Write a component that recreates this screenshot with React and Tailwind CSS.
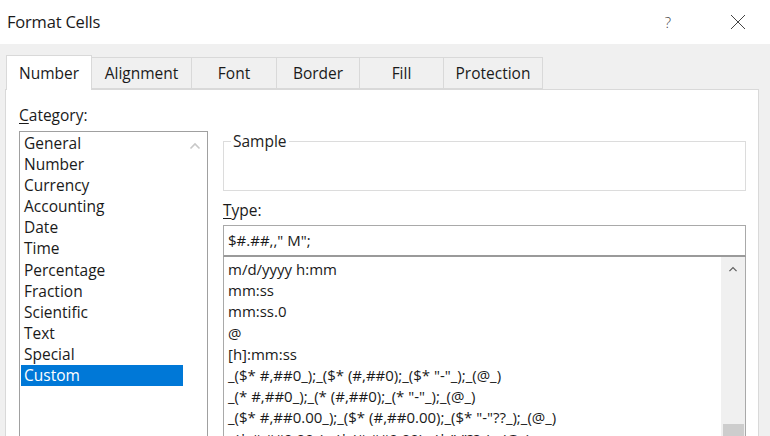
import React from "react";

const categories = [
  "General",
  "Number",
  "Currency",
  "Accounting",
  "Date",
  "Time",
  "Percentage",
  "Fraction",
  "Scientific",
  "Text",
  "Special",
  "Custom",
];

const formats = [
  "m/d/yyyy h:mm",
  "mm:ss",
  "mm:ss.0",
  "@",
  "[h]:mm:ss",
  '_($* #,##0_);_($* (#,##0);_($* "-"_);_(@_)',
  '_(* #,##0_);_(* (#,##0);_(* "-"_);_(@_)',
  '_($* #,##0.00_);_($* (#,##0.00);_($* "-"??_);_(@_)',
  '_(* #,##0.00_);_(* (#,##0.00);_(* "-"??_);_(@_)',
];

const tabs = ["Number", "Alignment", "Font", "Border", "Fill", "Protection"];
const tabWidths = ["w-[86px]", "w-[100px]", "w-[85px]", "w-[83px]", "w-[84px]", "w-[99px]"];

const Chevron = ({ className }) => (
  <svg width="12" height="8" viewBox="0 0 12 8" className={className}>
    <polyline points="1.5,6.5 6,2 10.5,6.5" fill="none" stroke="currentColor" strokeWidth="1.6" />
  </svg>
);

const App = () => {
  return (
    <div className="w-[770px] h-[436px] overflow-hidden bg-white text-[#1a1a1a] font-['Open_Sans','Noto_Sans',sans-serif]">
      {/* title bar */}
      <div className="h-[44px] flex items-center pl-[7px] pr-[24px] bg-white">
        <span className="text-[16.5px] tracking-[-0.2px] flex-1">Format Cells</span>
        <span className="text-[15px] font-light text-[#444] mr-[59px]">?</span>
        <svg width="16" height="16" viewBox="0 0 16 16" className="text-[#444]">
          <path d="M1 1 L15 15 M15 1 L1 15" stroke="currentColor" strokeWidth="1" fill="none" />
        </svg>
      </div>

      {/* body */}
      <div className="bg-[#f0f0f0] h-[392px] pt-[11px] px-[5px]">
        <div className="flex items-end h-[34px] pl-px">
          {tabs.map((t, i) =>
            i === 0 ? (
              <div
                key={t}
                className={`${tabWidths[i]} h-[35px] -mb-px relative z-10 bg-white border border-b-0 border-[#d9d9d9] flex items-center justify-center text-[15.5px] pt-[2px]`}
              >
                {t}
              </div>
            ) : (
              <div
                key={t}
                className={`${tabWidths[i]} h-[32px] bg-[#f0f0f0] border border-l-0 border-[#d9d9d9] flex items-center justify-center text-[15.5px] pt-[2px]`}
              >
                {t}
              </div>
            )
          )}
        </div>

        <div className="w-[754px] h-[400px] bg-white border border-[#d9d9d9] flex pl-[13px] pt-[14px]">
          {/* category column */}
          <div className="w-[204px] shrink-0">
            <div className="text-[15.5px] h-[22px] leading-[22px]">
              <span className="underline underline-offset-2">C</span>ategory:
            </div>
            <div className="mt-[5px] w-[189px] h-[320px] border border-[#a0a0a0] flex">
              <div className="flex-1 pl-px pt-px">
                {categories.map((c) => (
                  <div
                    key={c}
                    className={`h-[21.1px] leading-[21.1px] text-[15.5px] pl-[3px] ${
                      c === "Custom" ? "bg-[#0078d7] text-white" : ""
                    }`}
                  >
                    {c}
                  </div>
                ))}
              </div>
              <div className="w-[24px] bg-white flex justify-center pt-[10px]">
                <Chevron className="text-[#c8c8c8]" />
              </div>
            </div>
          </div>

          {/* right column */}
          <div className="w-[523px] pt-[36px]">
            <fieldset className="h-[61px] border border-[#dcdcdc] -mt-[10px] px-[7px]">
              <legend className="text-[15.5px] px-[2px] text-[#222]">Sample</legend>
            </fieldset>
            <div className="text-[15.5px] mt-[8px] h-[22px] leading-[22px]">
              <span className="underline underline-offset-2">T</span>ype:
            </div>
            <div className="mt-[4px] h-[32px] border border-[#a9a9a9] border-b-2 border-b-[#9a9a9a] flex items-center pl-[4px] text-[15px]">
              $#.##,," M";
            </div>
            <div className="h-[200px] border border-t-0 border-[#a9a9a9] flex">
              <div className="flex-1 pt-[2px] pl-[4px] overflow-hidden">
                {formats.map((f) => (
                  <div key={f} className="h-[21.2px] leading-[21.2px] text-[15px] whitespace-nowrap">
                    {f}
                  </div>
                ))}
              </div>
              <div className="w-[24px] bg-[#f0f0f0] flex flex-col items-center pt-[9px]">
                <Chevron className="text-[#606060]" />
                <div className="mt-[152px] w-[21px] h-[40px] bg-[#cdcdcd]" />
              </div>
            </div>
          </div>
        </div>
      </div>
    </div>
  );
};

export default App;
